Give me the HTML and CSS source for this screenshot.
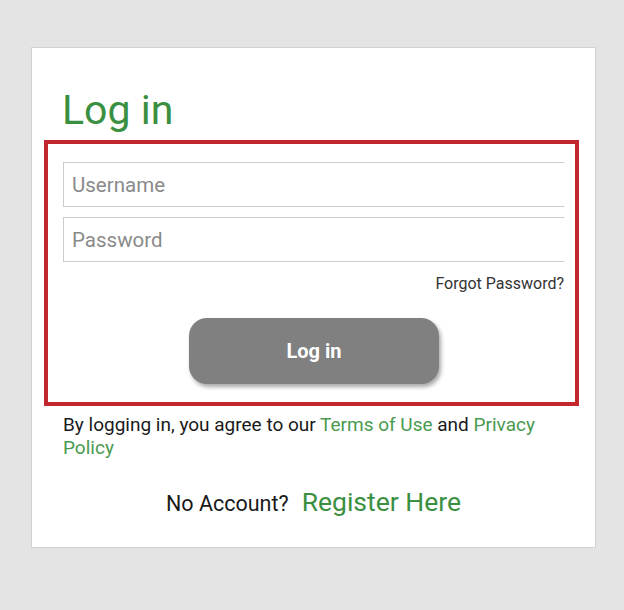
FILE: index.html
```html
<!DOCTYPE html>
<html lang="en">
<head>
<meta charset="utf-8">
<title>Log in</title>
<link rel="stylesheet" href="styles.css">
</head>
<body>
<div class="card">
  <h1 class="title">Log in</h1>
  <div class="login-box">
    <input class="field" type="text" placeholder="Username">
    <input class="field" type="password" placeholder="Password">
    <div class="forgot">Forgot Password?</div>
    <div class="btn-row">
      <button class="btn">Log in</button>
    </div>
  </div>
  <p class="terms">By logging in, you agree to our <a class="link" href="#">Terms of Use</a> and <a class="link" href="#">Privacy Policy</a></p>
  <div class="register">
    <span class="no-account">No Account?</span>
    <a class="register-link" href="#">Register Here</a>
  </div>
</div>
</body>
</html>
```
FILE: styles.css
```css
* { box-sizing: border-box; }
html, body {
  margin: 0;
  padding: 0;
  background: #e4e4e4;
  font-family: Roboto, "Liberation Sans", sans-serif;
}
.card {
  margin: 47px 0 0 31px;
  width: 565px;
  height: 501px;
  background: #ffffff;
  border: 1px solid #d2d2d2;
  padding: 0 16px 0 12px;
}
.title {
  margin: 38px 0 6px 0;
  padding-left: 18px;
  font-size: 41px;
  line-height: 48px;
  font-weight: 400;
  color: #3a8f41;
}
.login-box {
  border: 4px solid #c1272d;
  padding: 18px 10px 18px 15px;
  display: flex;
  flex-direction: column;
}
.field {
  display: block;
  width: 100%;
  height: 45px;
  margin: 0 0 10px 0;
  border: 1px solid #cccccc;
  border-right-color: transparent;
  padding: 0 0 0 8px;
  font-family: Roboto, "Liberation Sans", sans-serif;
  font-size: 20.5px;
  color: #333;
  background: #fff;
  outline: none;
}
.field:nth-of-type(2) { margin-bottom: 0; }
.field::placeholder { color: #8a8a8a; }
.forgot {
  margin-top: 12px;
  text-align: right;
  font-size: 16px;
  line-height: 19px;
  color: #333333;
  padding-right: 1px;
}
.btn-row {
  display: flex;
  justify-content: center;
  margin-top: 25px;
}
.btn {
  width: 250px;
  height: 66px;
  border: none;
  border-radius: 18px;
  background: #808080;
  color: #ffffff;
  font-family: Roboto, "Liberation Sans", sans-serif;
  font-size: 20px;
  font-weight: 700;
  box-shadow: 2px 3px 4px rgba(0, 0, 0, 0.35);
}
.terms {
  margin: 7px 0 0 0;
  padding-left: 19px;
  font-size: 19px;
  line-height: 23px;
  color: #1a1a1a;
}
.link {
  color: #4a9a4f;
  text-decoration: none;
}
.register {
  display: flex;
  justify-content: center;
  align-items: baseline;
  gap: 13px;
  margin-top: 28px;
  padding-left: 4px;
}
.no-account {
  font-size: 21.5px;
  color: #1a1a1a;
}
.register-link {
  font-size: 26.5px;
  line-height: 30px;
  color: #3a8f41;
  text-decoration: none;
}
```
